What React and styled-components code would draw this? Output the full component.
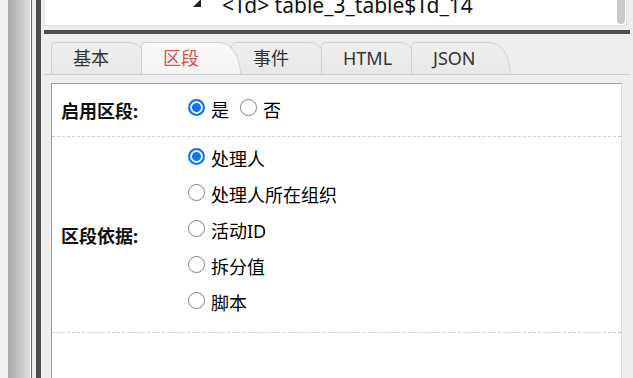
import React from "react";
import styled, { createGlobalStyle } from "styled-components";

const GlobalStyle = createGlobalStyle`
  html, body {
    margin: 0;
    padding: 0;
    overflow: hidden;
    background: #efefef;
  }
  body {
    font-family: "Noto Sans", "Noto Sans CJK SC", sans-serif;
    color: #000;
  }
`;

const Frame = styled.div`
  display: flex;
  width: 633px;
  height: 378px;
  overflow: hidden;
`;

const Gutter = styled.div`
  width: 8px;
  background: #f0f0f0;
`;

const Shade = styled.div`
  width: 22px;
  background: linear-gradient(to right, #a8a8a8, #dedede);
`;

const Edge = styled.div`
  width: 0;
  border-left: 1px solid #fff;
  border-right: 1px solid #666;
`;

const Gap = styled.div`
  width: ${(p) => p.w}px;
  background: #eee;
`;

const VSplit = styled.div`
  width: 5px;
  background: #4d4d4d;
`;

const Main = styled.div`
  flex: 1;
  display: flex;
  flex-direction: column;
  padding: 0 3px;
  background: #eee;
  min-width: 0;
`;

const TreePanel = styled.div`
  position: relative;
  height: 25px;
  background: #fff;
  border: 1px solid #ddd;
  border-top: none;
  margin-right: 3px;
  overflow: hidden;
`;

const TreeRow = styled.div`
  display: flex;
  align-items: flex-start;
  height: 29px;
  line-height: 24px;
  font-size: 21px;
  color: #111;
  white-space: nowrap;
  padding-left: ${(p) => p.indent}px;
  &:first-child {
    margin-top: -7px;
  }
`;

const Toggle = styled.svg`
  width: 8px;
  height: 8px;
  margin-top: 6px;
  margin-right: 21px;
  flex: none;
`;

const Thumb = styled.div`
  position: absolute;
  top: 0;
  right: 1px;
  width: 8px;
  height: 24px;
  border-radius: 0 0 4px 4px;
  background: #c9c9c9;
`;

const HSplit = styled.div`
  height: 4px;
  margin-top: 4px;
  background: #4d4d4d;
`;

const TabStrip = styled.div`
  display: flex;
  height: 32px;
  padding: 8px 0 0 7px;
  border-bottom: 1px solid #cfcfcf;
`;

const Tab = styled.div`
  position: relative;
  z-index: ${(p) => (p.active ? 2 : 1)};
  box-sizing: border-box;
  width: 100px;
  height: 32px;
  margin-right: -10px;
  padding-left: 21px;
  border: 1px solid #d2d2d2;
  border-bottom: none;
  border-radius: 5px 22px 0 0 / 5px 32px 0 0;
  background: ${(p) =>
    p.active
      ? "linear-gradient(#f9f9f9, #f3f3f3)"
      : "linear-gradient(#efefef, #e8e8e8)"};
  color: ${(p) => (p.active ? "#d9534f" : "#333")};
  font-size: 18px;
  line-height: 31px;
  white-space: nowrap;
`;

const Body = styled.div`
  flex: 1;
  display: flex;
  padding: 8px 8px 0 7px;
`;

const Sheet = styled.div`
  flex: 1;
  background: #fff;
  border-top: 1px solid #a3a3a3;
  border-left: 1px solid #9a9a9a;
  border-right: 1px solid #dcdcdc;
`;

const Row = styled.div`
  display: grid;
  grid-template-columns: 133px 1fr;
  height: ${(p) => p.h}px;
  border-bottom: 1px dashed #cfcfcf;
`;

const Label = styled.div`
  display: flex;
  align-items: center;
  padding-left: 9px;
  font-size: 18px;
  font-weight: bold;
  color: #111;
`;

const Inline = styled.div`
  display: flex;
  align-items: center;
`;

const Stack = styled.div`
  display: flex;
  flex-direction: column;
  padding: 4px 0 11px;
`;

const Option = styled.label`
  display: flex;
  align-items: center;
  height: ${(p) => (p.tall ? "36px" : "auto")};
  margin-right: 8px;
  font-size: 18px;
  color: #000;
  line-height: 24px;
`;

const Radio = styled.input.attrs({ type: "radio" })`
  appearance: none;
  flex: none;
  box-sizing: border-box;
  width: 17px;
  height: 17px;
  margin: 0 6px 5px 3px;
  border: 1.5px solid #808080;
  border-radius: 50%;
  background: #fff;
  &:checked {
    border: 2px solid #0a78f5;
    background: #0a78f5;
    box-shadow: inset 0 0 0 2px #fff;
  }
`;

const basis = ["处理人", "处理人所在组织", "活动ID", "拆分值", "脚本"];
const tabs = ["基本", "区段", "事件", "HTML", "JSON"];

export default function App() {
  return (
    <>
      <GlobalStyle />
      <Frame>
        <Gutter />
        <Shade />
        <Edge />
        <Gap w={4} />
        <VSplit />
        <Main>
          <TreePanel>
            <TreeRow indent={148}>
              <Toggle viewBox="0 0 8 8">
                <polygon points="8,0 8,8 0,8" fill="#222" />
              </Toggle>
              <span>&lt;Td&gt; table_3_table$Td_14</span>
            </TreeRow>
            <TreeRow indent={234}>
              <span>&lt;Td&gt; table_3_table$Td_15</span>
            </TreeRow>
            <Thumb />
          </TreePanel>
          <HSplit />
          <TabStrip>
            {tabs.map((t) => (
              <Tab key={t} active={t === "区段"}>
                {t}
              </Tab>
            ))}
          </TabStrip>
          <Body>
            <Sheet>
              <Row h={52}>
                <Label>启用区段:</Label>
                <Inline>
                  <Option>
                    <Radio name="enable" defaultChecked />是
                  </Option>
                  <Option>
                    <Radio name="enable" />否
                  </Option>
                </Inline>
              </Row>
              <Row h={195}>
                <Label>区段依据:</Label>
                <Stack>
                  {basis.map((b, i) => (
                    <Option tall key={b}>
                      <Radio name="basis" defaultChecked={i === 0} />
                      {b}
                    </Option>
                  ))}
                </Stack>
              </Row>
            </Sheet>
          </Body>
        </Main>
      </Frame>
    </>
  );
}
